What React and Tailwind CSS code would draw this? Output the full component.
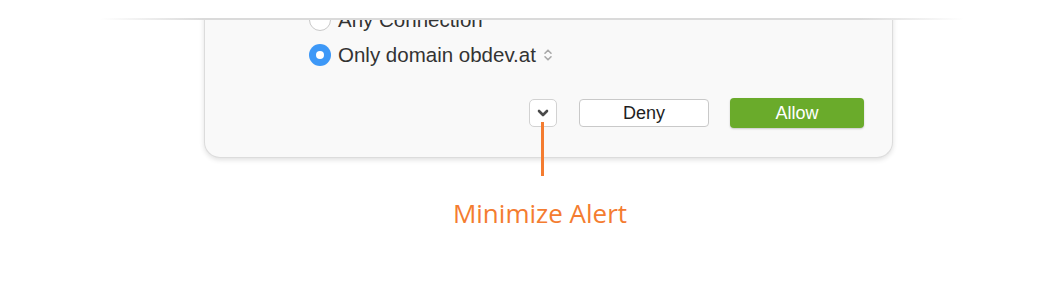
import { useState } from 'react';

const RADIO_OPTIONS = [
  { key: 'any', label: 'Any Connection' },
  { key: 'domain', label: 'Only domain obdev.at', popup: true },
];

function Radio({ checked }) {
  if (checked) {
    return (
      <span className="w-[22px] h-[22px] rounded-full bg-[#3d98f7] flex items-center justify-center shrink-0">
        <span className="w-[8px] h-[8px] rounded-full bg-white" />
      </span>
    );
  }
  return <span className="w-[22px] h-[22px] rounded-full bg-white border border-[#c9c9c9] shrink-0" />;
}

function UpDown() {
  return (
    <svg width="10" height="14" viewBox="0 0 10 14" fill="none" stroke="#a8a8a8" strokeWidth="1.6" strokeLinecap="round" strokeLinejoin="round">
      <path d="M2 5.2 L5 2.2 L8 5.2" />
      <path d="M2 8.8 L5 11.8 L8 8.8" />
    </svg>
  );
}

export default function App() {
  const [choice, setChoice] = useState('domain');

  return (
    <div className="w-[1064px] h-[284px] bg-white overflow-hidden" style={{ fontFamily: '"Liberation Sans", Arial, sans-serif' }}>
      <div className="h-[18px]" />
      <div className="h-[2px] ml-[100px] w-[864px] bg-[linear-gradient(to_right,transparent,#dadada_12%,#dadada_88%,transparent)]" />

      {/* clipped alert panel */}
      <div className="overflow-hidden pb-[8px]">
        <div className="ml-[204px] w-[689px] -mt-[11px] bg-[#f9f9f9] border border-t-0 border-[#dcdcdc] rounded-b-[16px] shadow-[0_2px_5px_rgba(0,0,0,0.12)] pb-[29px]">
          <div className="flex flex-col gap-[13px] pl-[104px]">
            {RADIO_OPTIONS.map(o => (
              <div key={o.key} onClick={() => setChoice(o.key)} className="h-[22px] flex items-center gap-[7px] cursor-default">
                <Radio checked={choice === o.key} />
                <span className="text-[20.5px] leading-[22px] text-[#333333]">{o.label}</span>
                {o.popup && <UpDown />}
              </div>
            ))}
          </div>

          <div className="mt-[32px] h-[30px] flex items-center justify-end pr-[28px]">
            <div className="relative">
              <button className="w-[28px] h-[28px] bg-white border border-[#d2d2d2] rounded-[5px] flex items-center justify-center">
                <svg width="12" height="8" viewBox="0 0 12 8" fill="none" stroke="#4a4a4a" strokeWidth="2.6" strokeLinecap="round" strokeLinejoin="round">
                  <path d="M2 2 L6 6 L10 2" />
                </svg>
              </button>
            </div>
            <button className="ml-[22px] w-[130px] h-[28px] bg-white border border-[#c9c9c9] rounded-[4px] text-[18px] text-[#1e1e1e]">Deny</button>
            <button className="ml-[21px] w-[134px] h-[30px] bg-[#6aab2b] rounded-[4px] text-[18px] text-white shadow-[0_1px_2px_rgba(0,0,0,0.2)]">Allow</button>
          </div>
        </div>
      </div>

      {/* annotation: pointer line and label */}
      <div className="relative">
        <span className="absolute left-[541px] -top-[44px] w-[3px] h-[54px] bg-[#f47c30]" />
      </div>
      <div className="mt-[30px] pl-[16px] text-center text-[26px] leading-[34px] text-[#f47c30]" style={{ fontFamily: '"Open Sans", sans-serif' }}>
        Minimize Alert
      </div>
    </div>
  );
}
